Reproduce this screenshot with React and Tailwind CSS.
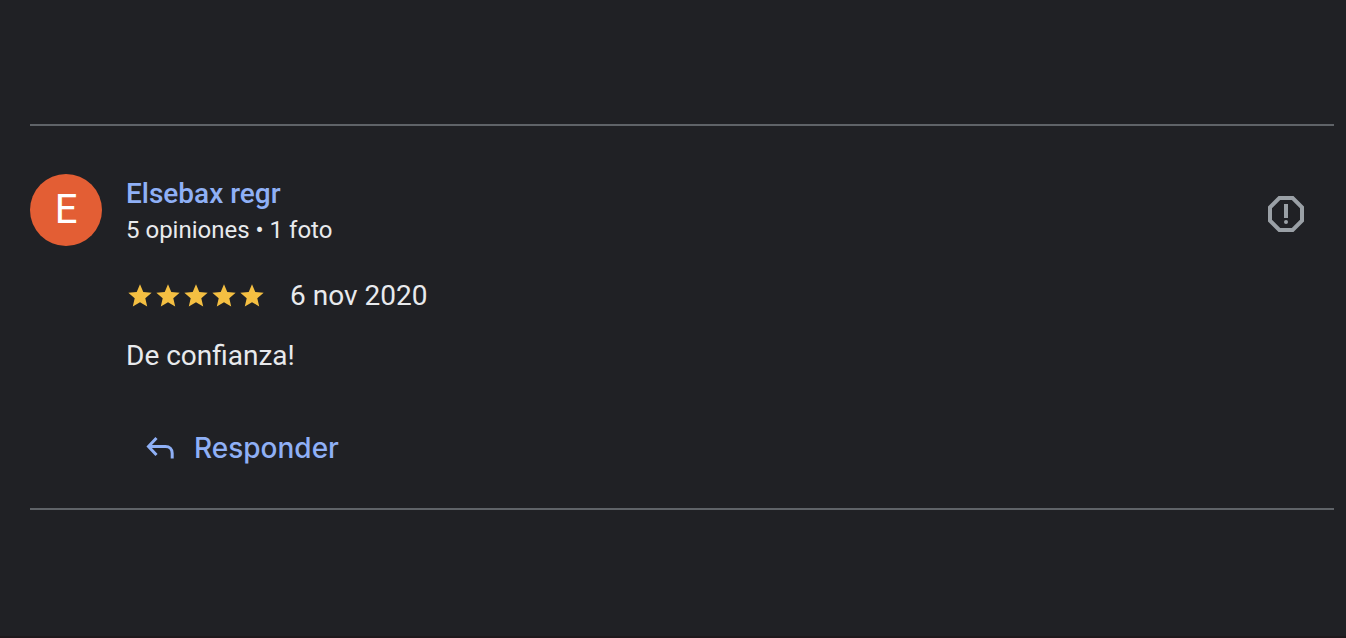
import React from "react";
import { MdStar, MdOutlineReport } from "react-icons/md";

const review = {
  author: "Elsebax regr",
  initial: "E",
  stats: "5 opiniones • 1 foto",
  stars: 5,
  date: "6 nov 2020",
  text: "De confianza!",
};

function ReplyIcon() {
  return (
    <svg
      width="28"
      height="24"
      viewBox="0 0 28 24"
      fill="none"
      stroke="currentColor"
      strokeWidth="3"
      aria-hidden="true"
    >
      <path d="M10.5 2 2.5 10.5 10.5 19" />
      <path d="M3 10.5H19.5C23.5 10.5 26.2 13.3 26.2 17.3V22.6" />
    </svg>
  );
}

function Stars({ count }) {
  return (
    <div className="flex" role="img" aria-label={`${count} de 5`}>
      {Array.from({ length: count }, (_, i) => (
        <MdStar key={i} className="size-7 text-[#f4bf42]" />
      ))}
    </div>
  );
}

function Review({ author, initial, stats, stars, date, text }) {
  return (
    <article className="flex gap-6 border-y-2 border-[#5f6368] pt-12 pb-6.5">
      <div className="flex size-18 shrink-0 items-center justify-center rounded-full bg-[#e35e34] text-[40px] text-white">
        {initial}
      </div>

      <div className="min-w-0 flex-1">
        <a href="#" className="block text-[28px] leading-10 font-medium text-[#8fb0f6]">
          {author}
        </a>
        <p className="text-2xl leading-8">{stats}</p>

        <div className="mt-8 flex items-center gap-6">
          <Stars count={stars} />
          <span className="text-[28px] leading-9">{date}</span>
        </div>

        <p className="mt-6 text-[28px] leading-9">{text}</p>

        <button className="mt-10 flex h-17 items-center gap-5 px-5 font-['Inter',sans-serif] text-[28px] font-medium text-[#8fb0f6]">
          <ReplyIcon />
          Responder
        </button>
      </div>

      <button
        aria-label="Denunciar"
        className="mt-4 mr-6 flex size-12 shrink-0 items-center justify-center text-[#9aa0a6]"
      >
        <MdOutlineReport className="size-12" />
      </button>
    </article>
  );
}

export default function App() {
  return (
    <main className="min-h-screen border-b-2 border-[#1e191c] bg-[#202125] pt-31 pr-3 pl-[30px] font-['Roboto',sans-serif] text-[#e8eaed]">
      <Review {...review} />
    </main>
  );
}
